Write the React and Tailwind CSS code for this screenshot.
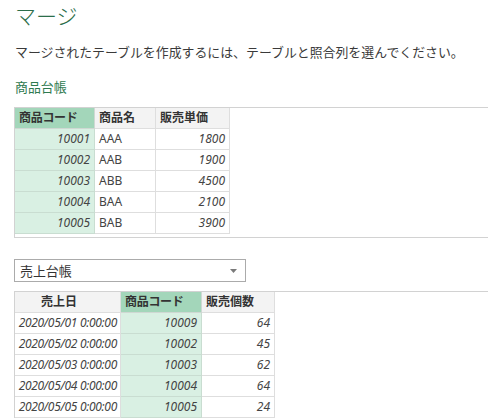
import React from 'react';

const font = { fontFamily: '"Noto Sans", "Noto Sans CJK JP", sans-serif' };

const products = [
    ['10001', 'AAA', '1800'],
    ['10002', 'AAB', '1900'],
    ['10003', 'ABB', '4500'],
    ['10004', 'BAA', '2100'],
    ['10005', 'BAB', '3900'],
];

const sales = [
    ['2020/05/01 0:00:00', '10009', '64'],
    ['2020/05/02 0:00:00', '10002', '45'],
    ['2020/05/03 0:00:00', '10003', '62'],
    ['2020/05/04 0:00:00', '10004', '64'],
    ['2020/05/05 0:00:00', '10005', '24'],
];

const App = () => {
    return (
        <div className="w-[488px] h-[419px] overflow-hidden bg-white text-[#444]" style={font}>
            {/* Header */}
            <div className="pl-[15px] h-[32px] leading-[32px] text-[21px] font-light text-[#2c6e4a]">マージ</div>
            <div className="pl-[15px] mt-[10px] leading-[20px] text-[12.9px] text-[#3a3a3a] whitespace-nowrap">
                マージされたテーブルを作成するには、テーブルと照合列を選んでください。
            </div>
            <div className="pl-[15px] mt-[15px] leading-[20px] text-[12.9px] text-[#2e7a4f]">商品台帳</div>

            {/* First table */}
            <div className="ml-[14px] mt-[10px] h-[131px] border-l border-t border-b border-[#d2d2d2]">
                <div className="flex h-[21px] text-[12px] font-bold text-[#333]">
                    <div className="w-[80px] bg-[#a3d6ba] border-r border-b border-[#cfd8d3] pl-[4px] leading-[20px] tracking-tight">商品コード</div>
                    <div className="w-[61px] bg-[#f3f3f3] border-r border-b border-[#dedede] pl-[4px] leading-[20px]">商品名</div>
                    <div className="w-[74px] bg-[#f3f3f3] border-r border-b border-[#dedede] pl-[4px] leading-[20px]">販売単価</div>
                </div>
                {products.map((r) => (
                    <div key={r[0]} className="flex h-[21px] text-[12px] leading-[20px]">
                        <div className="w-[80px] bg-[#d9f0e3] border-r border-b border-[#c9ddd1] pr-[4px] text-right italic">{r[0]}</div>
                        <div className="w-[61px] border-r border-b border-[#dedede] pl-[4px]">{r[1]}</div>
                        <div className="w-[74px] border-r border-b border-[#dedede] pr-[4px] text-right italic">{r[2]}</div>
                    </div>
                ))}
            </div>

            {/* Dropdown */}
            <div className="ml-[14px] mt-[21px] w-[232px] h-[23px] border border-[#ababab] flex items-center justify-between pl-[5px] pr-[8px] text-[12.9px] text-[#333]">
                <span className="leading-[20px]">売上台帳</span>
                <svg width="7" height="4" viewBox="0 0 7 4">
                    <path d="M0 0 L7 0 L3.5 4 Z" fill="#7a7a7a" />
                </svg>
            </div>

            {/* Second table */}
            <div className="ml-[14px] mt-[9px] border-l border-t border-[#d2d2d2]">
                <div className="flex h-[21px] text-[12px] font-bold text-[#333]">
                    <div className="w-[106px] bg-[#f3f3f3] border-r border-b border-[#dedede] pl-[26px] leading-[20px]">売上日</div>
                    <div className="w-[81px] bg-[#a3d6ba] border-r border-b border-[#cfd8d3] pl-[4px] leading-[20px] tracking-tight">商品コード</div>
                    <div className="w-[73px] bg-[#f3f3f3] border-r border-b border-[#dedede] pl-[4px] leading-[20px]">販売個数</div>
                </div>
                {sales.map((r) => (
                    <div key={r[0]} className="flex h-[21px] text-[12px] leading-[20px] italic">
                        <div className="w-[106px] border-r border-b border-[#dedede] pr-[3px] text-right tracking-[-0.3px]">{r[0]}</div>
                        <div className="w-[81px] bg-[#d9f0e3] border-r border-b border-[#c9ddd1] pr-[4px] text-right">{r[1]}</div>
                        <div className="w-[73px] border-r border-b border-[#dedede] pr-[4px] text-right">{r[2]}</div>
                    </div>
                ))}
            </div>
        </div>
    );
};

export default App;
